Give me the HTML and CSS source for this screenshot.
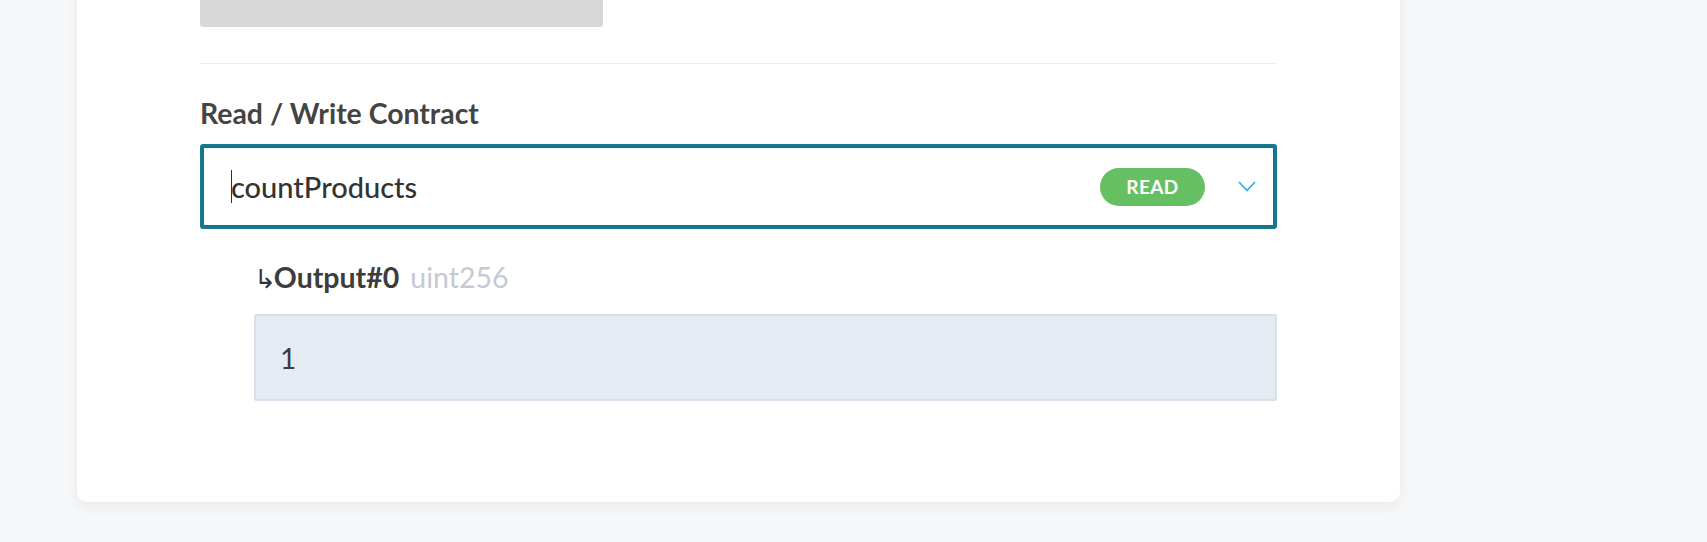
FILE: index.html
```html
<!DOCTYPE html>
<html>
<head>
<meta charset="utf-8">
<link rel="stylesheet" href="styles.css">
</head>
<body>
<div class="card">
  <div class="placeholder-bar"></div>
  <div class="divider"></div>
  <div class="section-label">Read / Write Contract</div>
  <div class="select">
    <span class="select-value"><span class="caret"></span>countProducts</span>
    <span class="badge">READ</span>
    <svg class="chevron" width="18" height="11" viewBox="0 0 18 11"><path d="M1 1 L9 9.5 L17 1" fill="none" stroke="#2bb3e6" stroke-width="1.7"/></svg>
  </div>
  <div class="output">
    <div class="output-label"><span class="arrow">↳</span><span class="output-name">Output#0</span><span class="output-type">uint256</span></div>
    <div class="output-box">1</div>
  </div>
</div>
</body>
</html>
```

FILE: styles.css
```css
html, body {
  margin: 0;
  padding: 0;
}
body {
  background: #f6f7f9;
  font-family: Lato, "Open Sans", sans-serif;
  height: 542px;
  overflow: hidden;
}
.card {
  margin-left: 77px;
  margin-top: -20px;
  width: 1323px;
  box-sizing: border-box;
  background: #ffffff;
  border-radius: 0 0 10px 10px;
  box-shadow: 0 4px 14px rgba(0, 0, 0, 0.06);
  padding: 0 123px 101px 123px;
}
.placeholder-bar {
  width: 403px;
  height: 47px;
  background: #d8d8d8;
  border-radius: 0 0 3px 3px;
}
.divider {
  margin-top: 36px;
  height: 1px;
  background: #e6eaf2;
}
.section-label {
  margin-top: 32px;
  font-size: 28.4px;
  line-height: 34px;
  font-weight: 700;
  color: #444444;
}
.select {
  margin-top: 14px;
  height: 85px;
  box-sizing: border-box;
  border: 3px solid #16788f;
  box-shadow: inset 0 0 0 1px #0f7189;
  border-radius: 3px;
  display: flex;
  align-items: center;
  padding: 0 18px 0 28px;
}
.select-value {
  flex: 1;
  font-size: 29px;
  font-weight: 500;
  color: #333333;
  display: flex;
  align-items: center;
}
.caret {
  width: 1px;
  height: 33px;
  background: #333;
  margin-right: -1px;
}
.badge {
  width: 105px;
  height: 38px;
  border-radius: 19px;
  background: #66bf63;
  color: #ffffff;
  font-weight: 700;
  font-size: 19px;
  letter-spacing: 0.4px;
  display: flex;
  align-items: center;
  justify-content: center;
  margin-right: 33px;
}
.chevron {
  display: block;
}
.output {
  margin-top: 31px;
  padding-left: 54px;
}
.output-label {
  font-size: 28.5px;
  line-height: 34px;
  display: flex;
  align-items: baseline;
}
.arrow {
  font-size: 26px;
  font-family: "DejaVu Sans", sans-serif;
  color: #333;
  margin-right: 0;
  letter-spacing: -2px;
}
.output-name {
  font-weight: 700;
  color: #3d3d3d;
  margin-right: 11px;
}
.output-type {
  color: #c3cad3;
}
.output-box {
  margin-top: 18px;
  height: 87px;
  box-sizing: border-box;
  background: #e4ebf3;
  border: 2px solid #d9e0ea;
  border-radius: 2px;
  display: flex;
  align-items: center;
  padding-left: 24px;
  font-size: 28px;
  color: #3d3d3d;
}
```
